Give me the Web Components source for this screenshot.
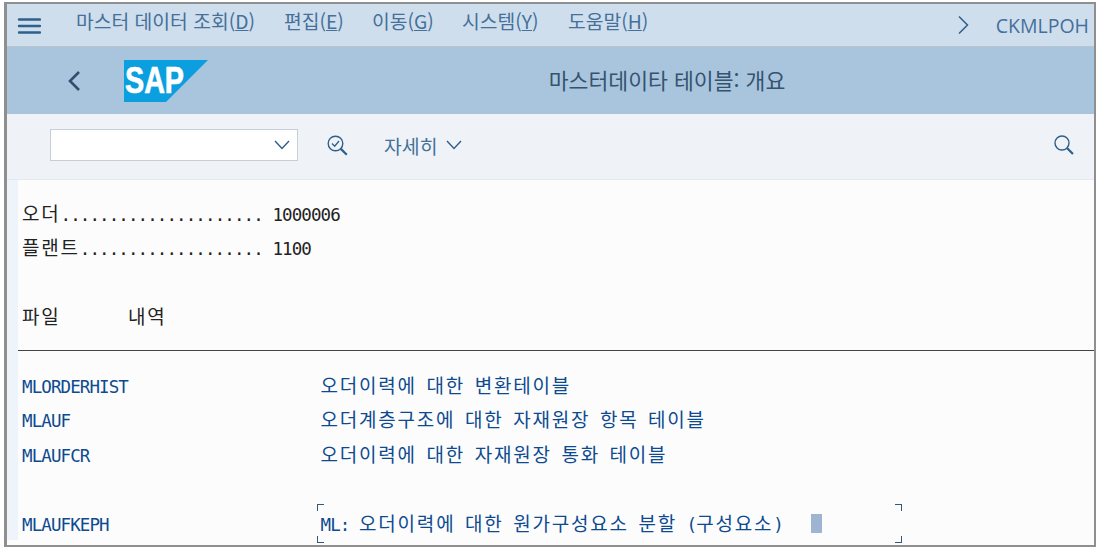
<!DOCTYPE html>
<html lang="ko">
<head>
<meta charset="utf-8">
<title>CKMLPOH</title>
<style>
html, body { margin: 0; padding: 0; background: #fff; }
body { width: 1098px; height: 551px; overflow: hidden; font-family: "Noto Sans CJK KR", "Open Sans", sans-serif; }
</style>
</head>
<body>
<sap-window>
    <sap-menubar slot="menu" transaction="CKMLPOH">
        <sap-menu-item style="width:208px">마스터 데이터 조회(<u>D</u>)</sap-menu-item>
        <sap-menu-item style="width:88px">편집(<u>E</u>)</sap-menu-item>
        <sap-menu-item style="width:90px">이동(<u>G</u>)</sap-menu-item>
        <sap-menu-item style="width:106px">시스템(<u>Y</u>)</sap-menu-item>
        <sap-menu-item>도움말(<u>H</u>)</sap-menu-item>
    </sap-menubar>
    <sap-titlebar slot="title">마스터데이타 테이블: 개요</sap-titlebar>
    <sap-toolbar slot="tools"></sap-toolbar>
    <abap-line text="오더..................... 1000006"></abap-line>
    <abap-line text="플랜트................... 1100"></abap-line>
    <abap-line text=" "></abap-line>
    <abap-line text="파일       내역"></abap-line>
    <abap-line rule></abap-line>
    <abap-line tone="blue" text="MLORDERHIST                    오더이력에 대한 변환테이블"></abap-line>
    <abap-line tone="blue" text="MLAUF                          오더계층구조에 대한 자재원장 항목 테이블"></abap-line>
    <abap-line tone="blue" text="MLAUFCR                        오더이력에 대한 자재원장 통화 테이블"></abap-line>
    <abap-line text=" "></abap-line>
    <abap-line tone="blue" selected text="MLAUFKEPH                      ML: 오더이력에 대한 원가구성요소 분할 (구성요소)"></abap-line>
</sap-window>

<script>
const ICON_COLOR = '#2f5f8a';

class SapWindow extends HTMLElement {
    constructor() {
        super();
        this.attachShadow({mode: 'open'});
    }

    connectedCallback() {
        this.shadowRoot.innerHTML = `
            <style>
        :host {
            display: block;
            box-sizing: border-box;
            width: 1092px;
            height: 545px;
            margin: 2px 0 0 4px;
            border: 2px solid #8f8f8f;
            border-left-width: 3px;
            overflow: hidden;
            background: #fcfcfd;
        }
        .list {
            background: #fcfcfd;
            border-left: 11px solid #eef4fa;
            padding: 16px 0 0 0;
        }
            </style>
            <slot name="menu"></slot>
            <slot name="title"></slot>
            <slot name="tools"></slot>
            <div class="list"><slot></slot></div>
        `;
    }
}

class SapMenubar extends HTMLElement {
    constructor() {
        super();
        this.attachShadow({mode: 'open'});
    }

    connectedCallback() {
        this.shadowRoot.innerHTML = `
            <style>
        :host {
            display: flex;
            align-items: center;
            height: 43px;
            box-sizing: border-box;
            background: #cfdeed;
            border-bottom: 1px solid #b9c4cf;
            color: #44709a;
            font-size: 19.3px;
        }
        .burger {
            display: flex;
            width: 69px;
            padding-left: 10px;
            box-sizing: border-box;
        }
        .items { display: flex; flex: 1; padding-bottom: 8px; }
        .more { display: flex; margin-right: 27px; }
        .tcode {
            font-family: "Open Sans", sans-serif;
            font-size: 19.5px;
            margin-right: 5px;
            padding-bottom: 0;
        }
            </style>
            <div class="burger">
                <svg width="24" height="18" viewBox="0 0 24 18">
                    <g stroke="${ICON_COLOR}" stroke-width="2.4" stroke-linecap="round">
                        <path d="M2 3.5H23M2 10H23M2 16.5H23"/>
                    </g>
                </svg>
            </div>
            <div class="items"><slot></slot></div>
            <div class="more">
                <svg width="11" height="20" viewBox="0 0 11 20">
                    <path d="M1 1.5L9.5 10L1 18.5" fill="none" stroke="${ICON_COLOR}" stroke-width="1.5"/>
                </svg>
            </div>
            <div class="tcode">${this.getAttribute('transaction')}</div>
        `;
    }
}

class SapMenuItem extends HTMLElement {
    constructor() {
        super();
        this.attachShadow({mode: 'open'});
    }

    connectedCallback() {
        this.shadowRoot.innerHTML = `
            <style>
        :host { display: block; white-space: nowrap; line-height: 26px; }
            </style>
            <slot></slot>
        `;
    }
}

class SapTitlebar extends HTMLElement {
    constructor() {
        super();
        this.attachShadow({mode: 'open'});
    }

    connectedCallback() {
        this.shadowRoot.innerHTML = `
            <style>
        :host {
            display: flex;
            align-items: center;
            height: 67px;
            background: #a9c5de;
            color: #34536f;
            font-size: 21.6px;
        }
        .back { display: flex; margin-left: 60px; }
        .logo { display: flex; margin-left: 43px; }
        .text { flex: 1; text-align: center; margin-left: 32px; padding-bottom: 2px; }
        svg text { font-family: "Liberation Sans", sans-serif; font-weight: 700; }
            </style>
            <div class="back">
                <svg width="14" height="22" viewBox="0 0 14 22">
                    <path d="M12 2L3 11L12 20" fill="none" stroke="#2e4f6e" stroke-width="2.6"/>
                </svg>
            </div>
            <div class="logo">
                <svg width="84" height="42" viewBox="0 0 84 42">
                    <path d="M0 0H84L42 42H0Z" fill="#0b9fe0"/>
                    <text x="1" y="33" font-size="36" fill="#fff" stroke="#fff" stroke-width="0.7" textLength="59" lengthAdjust="spacingAndGlyphs">SAP</text>
                </svg>
            </div>
            <div class="text"><slot></slot></div>
        `;
    }
}

class SapToolbar extends HTMLElement {
    constructor() {
        super();
        this.attachShadow({mode: 'open'});
    }

    connectedCallback() {
        this.shadowRoot.innerHTML = `
            <style>
        :host {
            display: flex;
            align-items: center;
            height: 66px;
            box-sizing: border-box;
            padding: 0 0 3px 43px;
            background: #eff3f8;
            border-bottom: 1px solid #e3e9f0;
            color: #44709a;
            font-size: 19.4px;
        }
        .combo {
            display: flex;
            align-items: center;
            justify-content: flex-end;
            width: 248px;
            height: 32px;
            box-sizing: border-box;
            padding-right: 7px;
            background: #fff;
            border: 1px solid #c6ced6;
        }
        .check { display: flex; margin-left: 29px; }
        .more { display: flex; align-items: center; gap: 8px; margin-left: 36px; }
        .find { display: flex; margin-left: auto; margin-right: 20px; }
        svg { display: block; }
            </style>
            <div class="combo">
                <svg width="16" height="10" viewBox="0 0 16 10">
                    <path d="M1 1L8 8.5L15 1" fill="none" stroke="${ICON_COLOR}" stroke-width="1.4"/>
                </svg>
            </div>
            <div class="check">
                <svg width="21" height="21" viewBox="0 0 21 21">
                    <circle cx="8.5" cy="8.5" r="7.3" fill="none" stroke="${ICON_COLOR}" stroke-width="1.4"/>
                    <path d="M5 8.5L7.7 11.2L12 6" fill="none" stroke="${ICON_COLOR}" stroke-width="1.3"/>
                    <path d="M13.6 13.6L19.8 19.8" stroke="${ICON_COLOR}" stroke-width="2.2"/>
                </svg>
            </div>
            <div class="more">
                <span>자세히</span>
                <svg width="16" height="10" viewBox="0 0 16 10">
                    <path d="M1 1L8 8.5L15 1" fill="none" stroke="${ICON_COLOR}" stroke-width="1.4"/>
                </svg>
            </div>
            <div class="find">
                <svg width="20" height="20" viewBox="0 0 20 20">
                    <circle cx="8" cy="8" r="7" fill="none" stroke="${ICON_COLOR}" stroke-width="1.4"/>
                    <path d="M13 13L19 19" stroke="${ICON_COLOR}" stroke-width="2.2"/>
                </svg>
            </div>
        `;
    }
}

// one line of the classic list screen: a fixed grid where hangul takes two cells
class AbapLine extends HTMLElement {
    constructor() {
        super();
        this.attachShadow({mode: 'open'});
    }

    connectedCallback() {
        const text = this.getAttribute('text') || '';
        const runs = text.match(/[\uAC00-\uD7A3]+|[^\uAC00-\uD7A3]+/g) || [];
        const html = runs.map(run => /[\uAC00-\uD7A3]/.test(run)
            ? `<span class="wide">${run}</span>`
            : `<span>${run}</span>`).join('');
        const selected = this.hasAttribute('selected') ? `
            <i class="mark tl"></i><i class="mark bl"></i><i class="mark tr"></i><i class="mark br"></i>
            <i class="cursor"></i>` : '';
        this.shadowRoot.innerHTML = `
            <style>
        :host {
            display: block;
            position: relative;
            height: 34.4px;
            color: #222;
            font-family: "DejaVu Sans Mono", monospace;
            font-size: 17.5px;
            letter-spacing: -0.905px;
        }
        :host([tone="blue"]) { color: #0d4a8f; }
        .text { height: 34.4px; line-height: 34.4px; padding-left: 4px; white-space: pre; }
        .rule { position: absolute; left: 0; right: 0; top: 16px; border-top: 1px solid #444; }
        .wide {
            font-family: "Noto Sans CJK KR", sans-serif;
            font-size: 19px;
            letter-spacing: 1.78px;
        }
        .mark { position: absolute; width: 6px; height: 6px; border: 0 solid #34587c; }
        .tl { left: 299px; top: -2px; border-width: 1px 0 0 1px; }
        .bl { left: 299px; bottom: -3px; border-width: 0 0 1px 1px; }
        .tr { left: 877px; top: -2px; border-width: 1px 1px 0 0; }
        .br { left: 877px; bottom: -3px; border-width: 0 1px 1px 0; }
        .cursor { position: absolute; left: 793px; top: 8px; width: 11px; height: 19px; background: #9db5d3; }
            </style>
            ${this.hasAttribute('rule') ? '<div class="rule"></div>' : `<div class="text">${html}</div>`}
            ${selected}
        `;
    }
}

customElements.define('sap-menu-item', SapMenuItem);
customElements.define('sap-menubar', SapMenubar);
customElements.define('sap-titlebar', SapTitlebar);
customElements.define('sap-toolbar', SapToolbar);
customElements.define('abap-line', AbapLine);
customElements.define('sap-window', SapWindow);
</script>
</body>
</html>
